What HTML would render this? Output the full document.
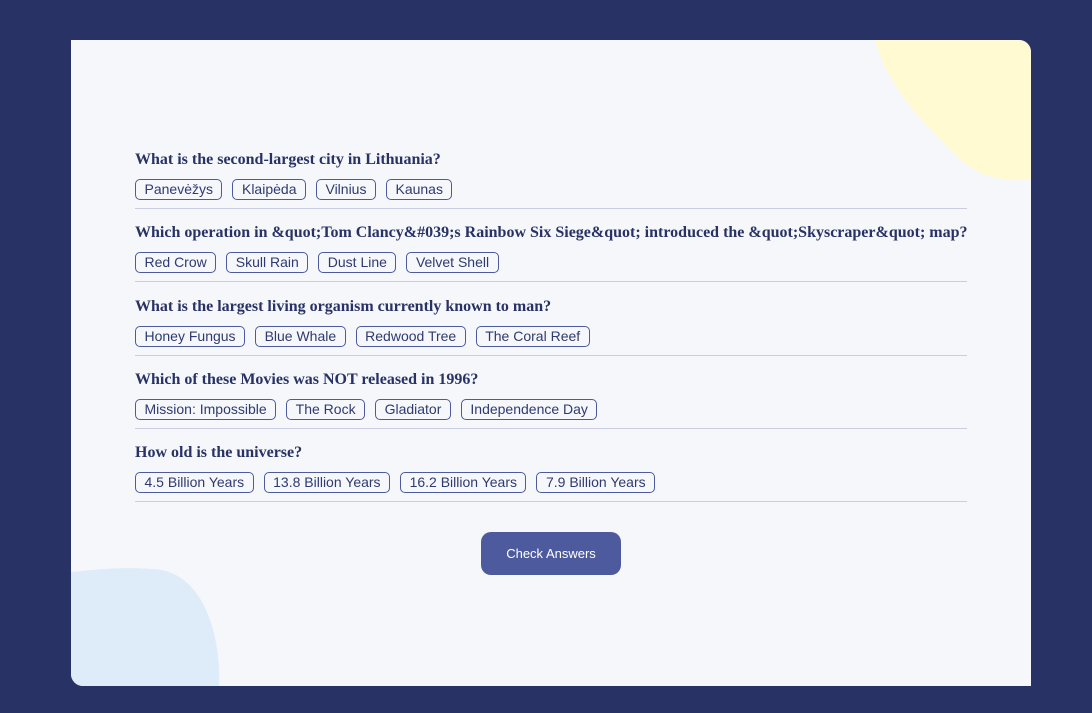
<!DOCTYPE html>
<html><head><meta charset="utf-8"><style>
html,body{margin:0;padding:0;}
body{width:1092px;height:713px;background:#293264;position:relative;overflow:hidden;}
.card{position:absolute;left:71px;top:40px;width:960px;height:646px;background:#F5F7FB;border-radius:0 12px 0 12px;overflow:hidden;}
svg.blob{position:absolute;}
.list{position:absolute;left:64px;top:108px;width:832px;}
.q{height:73.3px;box-sizing:border-box;}
.q h2{margin:0;font:bold 16px/18px "Liberation Serif",serif;color:#293264;padding-top:3px;white-space:nowrap;}
.opts{margin-top:10px;height:21px;display:flex;gap:10px;}
.opts span{display:inline-block;border:1px solid #4D5B9E;border-radius:5px;padding:0 8.5px;font:14px/19px "Liberation Sans",sans-serif;color:#2f3a70;}
.q hr{margin:8px 0 0;border:0;border-top:1px solid #C9CCE3;}
.btn{position:absolute;left:410px;top:492px;width:140px;height:43px;background:#4D5B9E;border-radius:10px;color:#fff;font:13px/43px "Liberation Sans",sans-serif;text-align:center;}
</style></head><body>
<div class="card">
<svg class="blob" style="left:0;top:0" width="960" height="646">
<path d="M804 0 C815 40 840 70 870 100 C905 140 925 140 960 140 L960 0 Z" fill="#FFFAD1"/>
<path d="M0 532 C30 529 60 526 90 530 C135 538 150 600 148 646 L0 646 Z" fill="#DEEBF8"/>
</svg>
<div class="list">
<div class="q"><h2>What is the second-largest city in Lithuania?</h2><div class="opts"><span>Panevėžys</span><span>Klaipėda</span><span>Vilnius</span><span>Kaunas</span></div><hr></div>
<div class="q"><h2>Which operation in &amp;quot;Tom Clancy&amp;#039;s Rainbow Six Siege&amp;quot; introduced the &amp;quot;Skyscraper&amp;quot; map?</h2><div class="opts"><span>Red Crow</span><span>Skull Rain</span><span>Dust Line</span><span>Velvet Shell</span></div><hr></div>
<div class="q"><h2>What is the largest living organism currently known to man?</h2><div class="opts"><span>Honey Fungus</span><span>Blue Whale</span><span>Redwood Tree</span><span>The Coral Reef</span></div><hr></div>
<div class="q"><h2>Which of these Movies was NOT released in 1996?</h2><div class="opts"><span>Mission: Impossible</span><span>The Rock</span><span>Gladiator</span><span>Independence Day</span></div><hr></div>
<div class="q"><h2>How old is the universe?</h2><div class="opts"><span>4.5 Billion Years</span><span>13.8 Billion Years</span><span>16.2 Billion Years</span><span>7.9 Billion Years</span></div><hr></div>
</div>
<div class="btn">Check Answers</div>
</div>
</body></html>
